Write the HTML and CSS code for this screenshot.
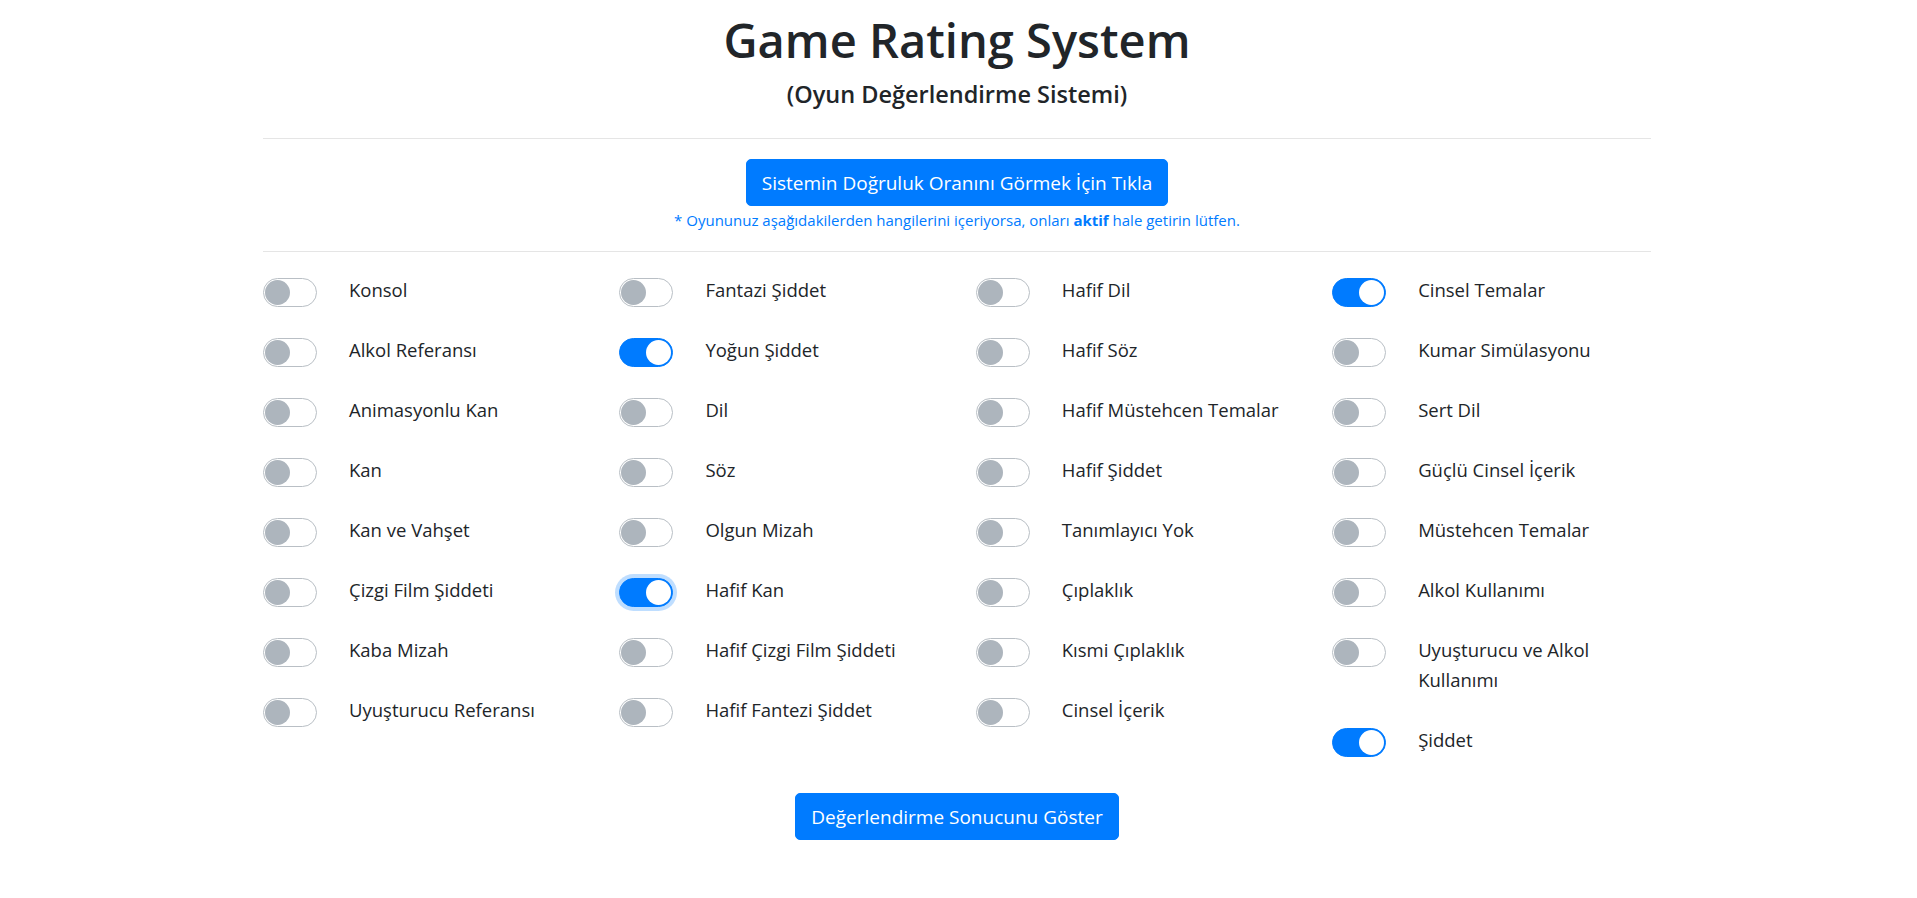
FILE: index.html
```html
<!DOCTYPE html>
<html lang="tr">
<head>
<meta charset="utf-8">
<title>Game Rating System</title>
<link rel="stylesheet" href="styles.css">
</head>
<body>
<div class="container">
  <header class="header">
    <h1 class="title">Game Rating System</h1>
    <h5 class="subtitle">(Oyun Değerlendirme Sistemi)</h5>
  </header>
  <hr class="rule">
  <div class="intro">
    <button class="btn">Sistemin Doğruluk Oranını Görmek İçin Tıkla</button>
    <p class="note">* Oyununuz aşağıdakilerden hangilerini içeriyorsa, onları <b>aktif</b> hale getirin lütfen.</p>
  </div>
  <hr class="rule rule-2">
  <div class="grid">
    <div class="col">
      <div class="item"><span class="switch"><span class="knob"></span></span><span class="label">Konsol</span></div>
      <div class="item"><span class="switch"><span class="knob"></span></span><span class="label">Alkol Referansı</span></div>
      <div class="item"><span class="switch"><span class="knob"></span></span><span class="label">Animasyonlu Kan</span></div>
      <div class="item"><span class="switch"><span class="knob"></span></span><span class="label">Kan</span></div>
      <div class="item"><span class="switch"><span class="knob"></span></span><span class="label">Kan ve Vahşet</span></div>
      <div class="item"><span class="switch"><span class="knob"></span></span><span class="label">Çizgi Film Şiddeti</span></div>
      <div class="item"><span class="switch"><span class="knob"></span></span><span class="label">Kaba Mizah</span></div>
      <div class="item"><span class="switch"><span class="knob"></span></span><span class="label">Uyuşturucu Referansı</span></div>
    </div>
    <div class="col">
      <div class="item"><span class="switch"><span class="knob"></span></span><span class="label">Fantazi Şiddet</span></div>
      <div class="item"><span class="switch on"><span class="knob"></span></span><span class="label">Yoğun Şiddet</span></div>
      <div class="item"><span class="switch"><span class="knob"></span></span><span class="label">Dil</span></div>
      <div class="item"><span class="switch"><span class="knob"></span></span><span class="label">Söz</span></div>
      <div class="item"><span class="switch"><span class="knob"></span></span><span class="label">Olgun Mizah</span></div>
      <div class="item"><span class="switch on focus"><span class="knob"></span></span><span class="label">Hafif Kan</span></div>
      <div class="item"><span class="switch"><span class="knob"></span></span><span class="label">Hafif Çizgi Film Şiddeti</span></div>
      <div class="item"><span class="switch"><span class="knob"></span></span><span class="label">Hafif Fantezi Şiddet</span></div>
    </div>
    <div class="col">
      <div class="item"><span class="switch"><span class="knob"></span></span><span class="label">Hafif Dil</span></div>
      <div class="item"><span class="switch"><span class="knob"></span></span><span class="label">Hafif Söz</span></div>
      <div class="item"><span class="switch"><span class="knob"></span></span><span class="label">Hafif Müstehcen Temalar</span></div>
      <div class="item"><span class="switch"><span class="knob"></span></span><span class="label">Hafif Şiddet</span></div>
      <div class="item"><span class="switch"><span class="knob"></span></span><span class="label">Tanımlayıcı Yok</span></div>
      <div class="item"><span class="switch"><span class="knob"></span></span><span class="label">Çıplaklık</span></div>
      <div class="item"><span class="switch"><span class="knob"></span></span><span class="label">Kısmi Çıplaklık</span></div>
      <div class="item"><span class="switch"><span class="knob"></span></span><span class="label">Cinsel İçerik</span></div>
    </div>
    <div class="col">
      <div class="item"><span class="switch on"><span class="knob"></span></span><span class="label">Cinsel Temalar</span></div>
      <div class="item"><span class="switch"><span class="knob"></span></span><span class="label">Kumar Simülasyonu</span></div>
      <div class="item"><span class="switch"><span class="knob"></span></span><span class="label">Sert Dil</span></div>
      <div class="item"><span class="switch"><span class="knob"></span></span><span class="label">Güçlü Cinsel İçerik</span></div>
      <div class="item"><span class="switch"><span class="knob"></span></span><span class="label">Müstehcen Temalar</span></div>
      <div class="item"><span class="switch"><span class="knob"></span></span><span class="label">Alkol Kullanımı</span></div>
      <div class="item"><span class="switch"><span class="knob"></span></span><span class="label">Uyuşturucu ve Alkol Kullanımı</span></div>
      <div class="item"><span class="switch on"><span class="knob"></span></span><span class="label">Şiddet</span></div>
    </div>
  </div>
  <div class="footer">
    <button class="btn btn-result">Değerlendirme Sonucunu Göster</button>
  </div>
</div>
</body>
</html>
```

FILE: styles.css
```css
* { box-sizing: border-box; }
html, body { margin: 0; padding: 0; background: #fff; }
body {
  font-family: "Open Sans", "Noto Sans", sans-serif;
  color: #212529;
  font-size: 19px;
  line-height: 30px;
}
.container {
  width: 1388px;
  margin: 0 0 0 calc(50% - 695.5px);
}
.header { text-align: center; padding-top: 11px; }
.title {
  margin: 0;
  font-size: 47px;
  line-height: 58px;
  font-weight: 600;
}
.subtitle {
  margin: 10px 0 0;
  font-size: 23.5px;
  line-height: 30px;
  font-weight: 600;
}
.rule {
  border: 0;
  border-top: 1px solid rgba(0,0,0,.1);
  margin: 29px 0 0;
  height: 0;
}
.rule-2 { margin-top: 19px; }
.intro { text-align: center; padding-top: 20px; }
.btn {
  font-family: inherit;
  font-size: 19px;
  line-height: 30px;
  color: #fff;
  background: #007bff;
  border: 1px solid #007bff;
  border-radius: 5px;
  padding: 7.5px 15px;
  cursor: pointer;
}
.note {
  margin: 0;
  padding-top: 2px;
  color: #007bff;
  font-size: 15px;
  line-height: 24px;
}
.note b { font-weight: 700; }
.grid {
  display: grid;
  grid-template-columns: repeat(4, 1fr);
  column-gap: 37.5px;
  padding-top: 26px;
}
.col {
  display: flex;
  flex-direction: column;
  gap: 30px;
}
.item {
  display: flex;
  align-items: flex-start;
  gap: 32px;
}
.switch {
  flex: none;
  width: 54px;
  height: 29px;
  border: 1px solid #b9bfc5;
  border-radius: 15px;
  background: #fff;
  display: flex;
  align-items: center;
  padding: 0 1px;
}
.knob {
  width: 25px;
  height: 25px;
  border-radius: 50%;
  background: #adb5bd;
}
.switch.on {
  background: #007bff;
  border-color: #007bff;
  justify-content: flex-end;
}
.switch.on .knob { background: #fff; }
.switch.focus { box-shadow: 0 0 0 4px rgba(0,123,255,.25); }
.label {
  flex: 1;
  min-width: 0;
  margin: -3px 0 3px;
  font-size: 18.5px;
  line-height: 30px;
}
.footer { text-align: center; padding-top: 35px; }
```
